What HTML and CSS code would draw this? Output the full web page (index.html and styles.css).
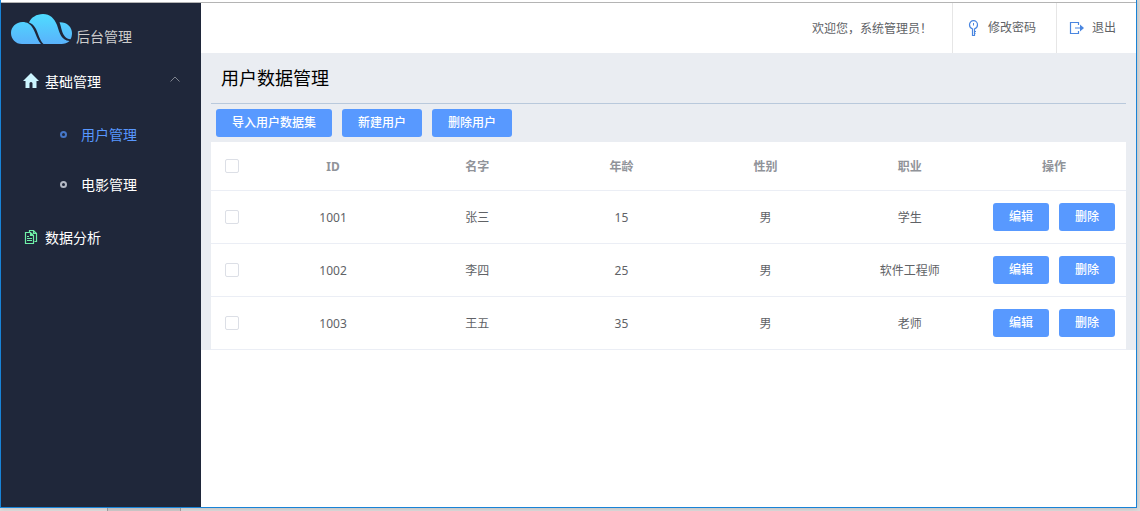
FILE: index.html
```
<!DOCTYPE html>
<html lang="zh-CN">
<head>
<meta charset="utf-8">
<title>后台管理</title>
<link rel="stylesheet" href="styles.css">
</head>
<body>
<div class="desktop">
  <div class="window">
    <aside class="sidebar">
      <div class="brand">
        <svg class="brand-logo" viewBox="0 0 62 31" aria-hidden="true">
          <defs>
            <linearGradient id="sky" x1="0" y1="0" x2="0" y2="31" gradientUnits="userSpaceOnUse">
              <stop offset="0" stop-color="#4fdcff"/>
              <stop offset="1" stop-color="#5ab1fb"/>
            </linearGradient>
          </defs>
          <g fill="url(#sky)">
            <path d="M11 30C4.500 30 0 25 0 19C0 13 5 8 11.500 8C16 8 19.500 10 22 14.500C25.500 21 26 25.500 30 30Z"/>
            <path d="M18 8.500C20 3.500 25.500 0 32 0C39 0 43.500 4.500 46 11C49 20 50 26 58.500 27C56.500 29 53.500 30 50.500 30H32.500C28.500 26 27.500 20 25 15C23.200 11.500 21 9.500 18 8.500Z"/>
            <path d="M48.500 8.200C56 8 61 13 61 19C61 21.500 60.500 23.500 59.500 25.300C55 25 52.500 21.500 51 17C50 14 49.700 11 48.500 8.200Z"/>
          </g>
        </svg>
        <span class="brand-name">后台管理</span>
      </div>
      <nav>
        <ul class="menu">
          <li>
            <a class="menu-item" href="#">
              <svg class="menu-icon" viewBox="0 0 16 16" aria-hidden="true"><path fill="#ccf5ff" d="M8 0L16 8H13.500V15H9.500V10Q8 8 6.500 10V15H2.500V8H0Z"/></svg>
              <span>基础管理</span>
              <svg class="menu-arrow" viewBox="0 0 10 6" aria-hidden="true"><path d="M.5 5.500L5 1L9.500 5.500" fill="none" stroke="#7d828d"/></svg>
            </a>
            <ul class="submenu">
              <li><a class="submenu-item active" href="#"><span class="dot"></span>用户管理</a></li>
              <li><a class="submenu-item" href="#"><span class="dot"></span>电影管理</a></li>
            </ul>
          </li>
          <li>
            <a class="menu-item" href="#">
              <svg class="menu-icon" viewBox="0 0 16 16" aria-hidden="true"><path fill="none" stroke="#6ff0a8" stroke-width="1.200" d="M6.500 3V1.500H10.500L13.500 4.500V12.500H11.500M10.500 1.500V4.500H13.500M2.500 3.500H7.500L10.500 6.500V14.500H2.500ZM7.500 3.500V6.500H10.500M4 7.500H6M4 9.500H9M4 11.500H9"/></svg>
              <span>数据分析</span>
            </a>
          </li>
        </ul>
      </nav>
    </aside>
    <div class="content">
      <header class="topbar">
        <span class="welcome">欢迎您，系统管理员！</span>
        <a class="topbar-link" href="#">
          <svg class="topbar-icon" viewBox="0 0 16 16" fill="none" stroke="#4a86e0" aria-hidden="true"><path d="M7.500 8.800C5.500 8.300 4.500 6.800 4.500 4.800A4 4.200 0 0 1 12.500 4.800C12.500 6.800 11.500 8.300 9.500 8.800M7.500 8.500V15.500H9.500V8.500M9.500 11.500H11M9.500 13.500H10.500" stroke-width="1.200"/><path d="M8.500 3V5.500"/></svg>
          修改密码
        </a>
        <a class="topbar-link" href="#">
          <svg class="topbar-icon" viewBox="0 0 16 16" fill="none" stroke="#4a86e0" stroke-width="1.200" aria-hidden="true"><path d="M9.500 5V2.500H1.500V13.500H9.500V11M6 8H13"/><path fill="#4a86e0" stroke="none" d="M11 4.500L15 8L11 11.500Z"/></svg>
          退出
        </a>
      </header>
      <main class="panel">
        <h1 class="panel-title">用户数据管理</h1>
        <div class="toolbar">
          <button class="button" type="button">导入用户数据集</button>
          <button class="button" type="button">新建用户</button>
          <button class="button" type="button">删除用户</button>
        </div>
        <table class="users">
          <thead>
            <tr><th class="pick"><input class="check" type="checkbox" aria-label="全选"></th><th>ID</th><th>名字</th><th>年龄</th><th>性别</th><th>职业</th><th>操作</th></tr>
          </thead>
          <tbody>
            <tr><td class="pick"><input class="check" type="checkbox" aria-label="选择 1001"></td><td>1001</td><td>张三</td><td>15</td><td>男</td><td>学生</td><td><div class="actions"><button class="button" type="button">编辑</button><button class="button" type="button">删除</button></div></td></tr>
            <tr><td class="pick"><input class="check" type="checkbox" aria-label="选择 1002"></td><td>1002</td><td>李四</td><td>25</td><td>男</td><td>软件工程师</td><td><div class="actions"><button class="button" type="button">编辑</button><button class="button" type="button">删除</button></div></td></tr>
            <tr><td class="pick"><input class="check" type="checkbox" aria-label="选择 1003"></td><td>1003</td><td>王五</td><td>35</td><td>男</td><td>老师</td><td><div class="actions"><button class="button" type="button">编辑</button><button class="button" type="button">删除</button></div></td></tr>
          </tbody>
        </table>
      </main>
    </div>
  </div>
</div>
</body>
</html>
```
FILE: styles.css
```
* {
  box-sizing: border-box;
}

body {
  margin: 0;
  font-family: "Noto Sans", "Noto Sans CJK SC", sans-serif;
  font-size: 12px;
  color: #606266;
}

a {
  color: inherit;
  text-decoration: none;
}

ul {
  margin: 0;
  padding: 0;
  list-style: none;
}

.desktop {
  display: flex;
  min-height: 100vh;
  padding: 0 3px 3px 0;
  background: linear-gradient(90deg, #e2e0e0 107px, #a3a1a1 107px, #a3a1a1 108px, #d0cdcd 108px, #d0cdcd 180px, #a3a1a1 180px, #a3a1a1 181px, #dedddd 181px);
}

.window {
  display: flex;
  flex: 1;
  padding-top: 2px;
  background: #fff;
  border: 1px solid #1883d7;
  border-top: 0;
  box-shadow: 0 0 6px rgba(0, 0, 0, 0.2);
}

.sidebar {
  width: 200px;
  flex: none;
  background: #1f273a;
  border-top: 1px solid #b4b4b4;
}

.brand {
  display: flex;
  align-items: flex-end;
  gap: 3px;
  height: 50px;
  padding: 0 10px 8px;
}

.brand-logo {
  width: 62px;
  height: 31px;
}

.brand-name {
  font-size: 14px;
  line-height: 16px;
  color: #ccc;
}

.menu-item {
  display: flex;
  align-items: center;
  height: 56px;
  padding: 0 21px 0 22px;
  font-size: 14px;
  color: #fff;
}

.menu-icon {
  width: 16px;
  height: 16px;
  margin-right: 6px;
}

.menu-arrow {
  width: 10px;
  height: 6px;
  margin-left: auto;
  margin-bottom: 4px;
}

.submenu-item {
  display: flex;
  align-items: center;
  gap: 14px;
  height: 50px;
  padding-left: 59px;
  font-size: 14px;
  color: #fff;
}

.submenu-item.active {
  color: #5897ff;
}

.dot {
  width: 7px;
  height: 7px;
  border: 2px solid #b4b9c4;
  border-radius: 50%;
}

.active .dot {
  border-color: #4677c8;
}

.content {
  flex: 1;
  min-width: 0;
  border-top: 1px solid #b4b4b4;
}

.topbar {
  display: flex;
  justify-content: flex-end;
  height: 50px;
  line-height: 52px;
}

.welcome {
  padding-right: 20px;
}

.topbar-link {
  display: flex;
  align-items: center;
  gap: 7px;
  padding: 0 20px 0 12px;
  border-left: 1px solid #e6e6e6;
}

.topbar-icon {
  width: 16px;
  height: 16px;
}

.panel {
  padding: 0 10px;
  background: #eaedf2;
}

.panel-title {
  height: 51px;
  margin: 0;
  padding-left: 10px;
  border-bottom: 1px solid #b9c9dc;
  font-size: 18px;
  font-weight: 400;
  line-height: 50px;
  color: #000;
}

.toolbar {
  display: flex;
  gap: 10px;
  padding: 5px;
}

.button {
  height: 28px;
  padding: 0 16px;
  border: 0;
  border-radius: 3px;
  background: #5899ff;
  font: 500 12px/28px "Noto Sans", "Noto Sans CJK SC", sans-serif;
  color: #fff;
}

.users {
  width: 100%;
  table-layout: fixed;
  border-collapse: separate;
  border-spacing: 0;
  background: #fff;
}

.users th,
.users td {
  padding: 0;
  border-bottom: 1px solid #ebeef5;
  text-align: center;
}

.users th {
  height: 49px;
  color: #909399;
}

.users td {
  height: 53px;
}

.users .pick {
  width: 50px;
  padding-left: 14px;
  text-align: left;
}

.check {
  display: block;
  width: 14px;
  height: 14px;
  margin: 0;
  appearance: none;
  border: 1px solid #dcdfe6;
  border-radius: 2px;
  background: #fff;
}

.check:checked {
  border-color: #5899ff;
  background: #5899ff;
}

.actions {
  display: flex;
  justify-content: center;
  gap: 10px;
}
```
